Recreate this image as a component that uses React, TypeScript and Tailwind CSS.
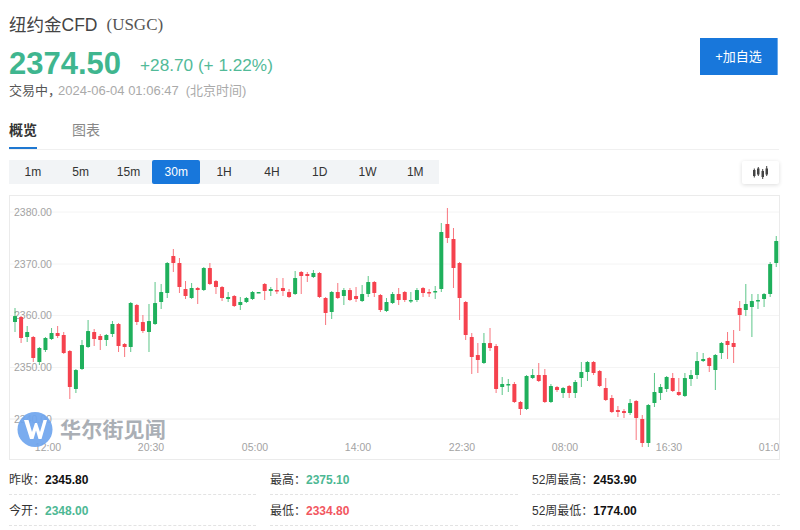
const PERIODS = ["1m", "5m", "15m", "30m", "1H", "4H", "1D", "1W", "1M"];

const STATS = [
  [
    { label: "昨收：", value: "2345.80", tone: "text-[#111]" },
    { label: "今开：", value: "2348.00", tone: "text-[#4db894]" },
  ],
  [
    { label: "最高：", value: "2375.10", tone: "text-[#4db894]" },
    { label: "最低：", value: "2334.80", tone: "text-[#f2575f]" },
  ],
  [
    { label: "52周最高：", value: "2453.90", tone: "text-[#111]" },
    { label: "52周最低：", value: "1774.00", tone: "text-[#111]" },
  ],
];

const Y_LABELS = [
  { y: 212, text: "2380.00" },
  { y: 264, text: "2370.00" },
  { y: 315.5, text: "2360.00" },
  { y: 367.5, text: "2350.00" },
  { y: 419, text: "2340.00" },
];

const X_LABELS = [
  { x: 48, text: "12:00" },
  { x: 151, text: "20:30" },
  { x: 255, text: "05:00" },
  { x: 358, text: "14:00" },
  { x: 462, text: "22:30" },
  { x: 565, text: "08:00" },
  { x: 669, text: "16:30" },
  { x: 772, text: "01:00" },
];

// up/down, wick top, body top, body bottom, wick bottom (page pixels)
const CANDLES: [string, number, number, number, number][] = [
  ["g", 308, 316, 322, 332], ["r", 316, 317, 338, 343], ["g", 326, 332, 337, 342], ["r", 336, 337, 358, 362],
  ["g", 347, 348, 362, 365], ["g", 337, 338, 350, 352], ["g", 328, 333, 339, 340], ["r", 326, 333, 336, 338],
  ["r", 332, 335, 353, 354], ["r", 350, 351, 387, 399], ["g", 369, 370, 389, 393], ["g", 340, 345, 369, 370],
  ["g", 320, 331, 347, 348], ["r", 329, 332, 339, 346], ["r", 334, 336, 340, 350], ["g", 334, 335, 340, 346],
  ["g", 321, 324, 334, 337], ["r", 323, 324, 346, 352], ["r", 343, 344, 347, 357], ["g", 302, 303, 347, 352],
  ["r", 304, 305, 322, 325], ["r", 315, 322, 331, 333], ["g", 304, 321, 332, 352], ["g", 282, 303, 324, 325],
  ["g", 284, 292, 302, 309], ["g", 262, 263, 293, 298], ["r", 249, 256, 263, 272], ["r", 258, 263, 287, 293],
  ["r", 281, 289, 296, 299], ["g", 283, 288, 298, 299], ["r", 287, 288, 290, 304], ["g", 267, 268, 290, 291],
  ["r", 263, 268, 284, 285], ["r", 280, 281, 287, 294], ["r", 286, 287, 298, 301], ["g", 292, 297, 299, 302],
  ["r", 295, 296, 306, 307], ["g", 297, 302, 305, 310], ["g", 297, 298, 302, 303], ["g", 291, 292, 299, 300],
  ["g", 292, 292, 293, 293], ["r", 283, 284, 291, 300], ["g", 287, 289, 291, 296], ["r", 278, 290, 291, 294],
  ["r", 278, 288, 291, 296], ["r", 289, 292, 297, 298], ["g", 271, 278, 294, 295], ["r", 271, 272, 276, 294],
  ["r", 272, 274, 276, 282], ["g", 270, 273, 277, 278], ["r", 272, 273, 297, 298], ["r", 297, 298, 313, 325],
  ["g", 291, 292, 312, 319], ["r", 283, 292, 298, 299], ["g", 288, 290, 296, 305], ["r", 288, 290, 300, 301],
  ["r", 287, 296, 299, 302], ["g", 285, 294, 301, 302], ["g", 276, 282, 294, 297], ["r", 281, 282, 293, 297],
  ["r", 294, 295, 310, 312], ["g", 298, 302, 311, 312], ["g", 292, 294, 303, 304], ["r", 288, 294, 300, 305],
  ["r", 291, 292, 300, 302], ["g", 292, 300, 301, 303], ["g", 288, 290, 300, 302], ["r", 287, 288, 293, 297],
  ["r", 289, 292, 293, 297], ["g", 286, 291, 292, 299], ["g", 223, 232, 289, 292], ["r", 208, 224, 238, 243],
  ["r", 228, 239, 268, 288], ["r", 262, 263, 298, 320], ["r", 301, 302, 335, 340], ["r", 333, 337, 357, 374],
  ["r", 343, 355, 360, 373], ["g", 333, 343, 363, 364], ["r", 328, 343, 348, 351], ["r", 344, 346, 389, 393],
  ["g", 377, 384, 387, 395], ["g", 379, 384, 385, 392], ["r", 382, 384, 402, 403], ["r", 401, 402, 409, 415],
  ["g", 375, 376, 409, 410], ["g", 369, 375, 378, 379], ["r", 363, 375, 381, 382], ["r", 369, 375, 402, 403],
  ["g", 384, 386, 402, 403], ["r", 386, 387, 390, 392], ["g", 387, 388, 393, 398], ["r", 385, 386, 393, 398],
  ["g", 380, 382, 393, 398], ["g", 362, 372, 378, 387], ["g", 361, 362, 372, 381], ["r", 361, 362, 373, 375],
  ["r", 370, 371, 386, 387], ["r", 378, 388, 400, 401], ["r", 395, 398, 412, 413], ["r", 406, 410, 412, 417],
  ["r", 409, 411, 413, 418], ["g", 399, 403, 413, 415], ["r", 400, 401, 418, 440], ["r", 415, 419, 443, 447],
  ["g", 404, 405, 443, 447], ["g", 373, 392, 403, 407], ["g", 384, 387, 393, 400], ["g", 376, 377, 389, 392],
  ["r", 373, 378, 391, 392], ["r", 378, 392, 395, 396], ["g", 373, 378, 396, 397], ["g", 370, 375, 379, 386],
  ["g", 352, 361, 375, 379], ["g", 353, 359, 361, 362], ["r", 357, 358, 366, 372], ["g", 354, 355, 370, 390],
  ["g", 342, 343, 353, 359], ["r", 332, 341, 345, 359], ["r", 330, 343, 347, 363], ["r", 301, 308, 315, 331],
  ["g", 284, 304, 310, 316], ["g", 294, 301, 307, 337], ["g", 294, 300, 301, 309], ["g", 293, 294, 299, 307],
  ["g", 262, 264, 294, 297], ["g", 236, 241, 263, 267],
];

function CandleChart() {
  return (
    <svg width="769" height="263" viewBox="10 196 769 263" className="block">
      {Y_LABELS.map((label) => (
        <line key={label.y} x1="10" x2="779" y1={label.y} y2={label.y} stroke={label.y === 419 ? "#ececec" : "#f4f4f4"} />
      ))}
      {Y_LABELS.map((label) => (
        <text key={label.text} x="14" y={label.y + 3.5} fontSize="10.5" fill="#a3a3a3">
          {label.text}
        </text>
      ))}
      {X_LABELS.map((label) => (
        <text key={label.text} x={label.x} y="451" fontSize="10.5" fill="#a3a3a3" textAnchor="middle">
          {label.text}
        </text>
      ))}
      {CANDLES.map(([dir, wickTop, bodyTop, bodyBottom, wickBottom], i) => {
        const x = 15 + 6.09 * i;
        const color = dir === "g" ? "#1fb05c" : "#f5424e";
        return (
          <g key={i}>
            <rect x={x - 0.5} y={wickTop} width="1" height={wickBottom - wickTop} fill={color} opacity="0.72" />
            <rect x={x - 2} y={bodyTop} width="4" height={Math.max(bodyBottom - bodyTop, 1.5)} fill={color} rx="0.5" />
          </g>
        );
      })}
      <circle cx="35" cy="429.5" r="17.5" fill="#6fa5ee" opacity="0.92" />
      <polygon
        points="24,420 28.5,420 32,432 35,423 37,423 40,432 43.5,420 47,420 41.5,439 38.5,439 36,430.5 33.5,439 30,439"
        fill="#ffffff"
      />
      <text x="60" y="437" fontSize="21" fontWeight="700" fill="#a6abb2" letterSpacing="0.2" opacity="0.95">
        华尔街见闻
      </text>
    </svg>
  );
}

export default function App() {
  return (
    <div className="w-[800px] h-[530px] overflow-hidden bg-white px-[9px] font-['Liberation_Sans','Noto_Sans_CJK_SC',sans-serif]">
      <div className="w-[770px]">
        <div className="flex items-start justify-between h-[149px]">
          <div>
            <div className="pt-[6px] h-[44px] flex items-center text-[17.5px] leading-[24px] text-[#444]">
              纽约金CFD
              <span className="ml-[9px] font-['Liberation_Serif',serif] text-[17px] text-[#555]">(USGC)</span>
            </div>
            <div className="flex items-center h-[36px] mt-[2px]">
              <span className="text-[31px] leading-[36px] font-bold text-[#3fb68f]">2374.50</span>
              <span className="ml-[19px] mt-[4px] text-[17.2px] text-[#52ba98]">+28.70 (+ 1.22%)</span>
            </div>
            <div className="flex items-center h-[20px] -mt-[1px] text-[13px] text-[#aaa]">
              <span className="text-[#555]">交易中，</span>
              <span className="-ml-[3px]">2024-06-04 01:06:47</span>
              <span className="ml-[7px]">(北京时间)</span>
            </div>
            <div className="flex mt-[19px] h-[29px] text-[14px] leading-[20px]">
              <span className="w-[28px] font-bold text-[#333] border-b-[2px] border-[#1f78d1]">概览</span>
              <span className="ml-[35px] text-[#888]">图表</span>
            </div>
          </div>
          <button className="mt-[38px] mr-[1px] w-[78px] h-[37px] bg-[#1877db] text-white text-[13px] border-r border-[#6aa9ea]">
            +加自选
          </button>
        </div>
        <div className="h-px bg-[#f0f0f0]" />
        <div className="flex items-center justify-between mt-[10px] h-[24px]">
          <div className="flex bg-[#f2f4f6] h-[24px] text-[12px] text-[#333]">
            {PERIODS.map((p) => (
              <div
                key={p}
                className={
                  p === "30m"
                    ? "w-[47.8px] flex items-center justify-center bg-[#1877db] text-white rounded-[2px]"
                    : "w-[47.8px] flex items-center justify-center"
                }
              >
                {p}
              </div>
            ))}
          </div>
          <div className="w-[37px] h-[23px] flex items-center justify-center bg-white rounded-[2px] shadow-[0_1px_4px_rgba(0,0,0,0.14)]">
            <svg width="15" height="13" viewBox="0 0 15 13">
              <rect x="0" y="4" width="2.5" height="6" fill="#444" />
              <rect x="0.8" y="2.5" width="1" height="9" fill="#444" />
              <rect x="4" y="2.5" width="2.5" height="6" fill="#444" />
              <rect x="4.8" y="1" width="1" height="9" fill="#444" />
              <rect x="8.5" y="5" width="2.5" height="6" fill="#444" />
              <rect x="9.2" y="3" width="1" height="10" fill="#444" />
              <rect x="12.5" y="2.5" width="2.5" height="6" fill="#444" />
              <rect x="13.2" y="0" width="1" height="10" fill="#444" />
            </svg>
          </div>
        </div>
        <div className="mt-[11px] w-[771px] h-[265px] border border-[#ebebeb]">
          <CandleChart />
        </div>
        <div className="mt-[4px] grid grid-cols-[247px_248px_248px] gap-x-[14px] text-[12px]">
          {STATS.map((col) => (
            <div key={col[0].label}>
              {col.map((row) => (
                <div
                  key={row.label}
                  className="h-[31px] flex items-center pt-[2px] text-[#333] border-b border-dashed border-[#e3e3e3]"
                >
                  {row.label}
                  <span className={`font-bold ${row.tone}`}>{row.value}</span>
                </div>
              ))}
            </div>
          ))}
        </div>
      </div>
    </div>
  );
}
